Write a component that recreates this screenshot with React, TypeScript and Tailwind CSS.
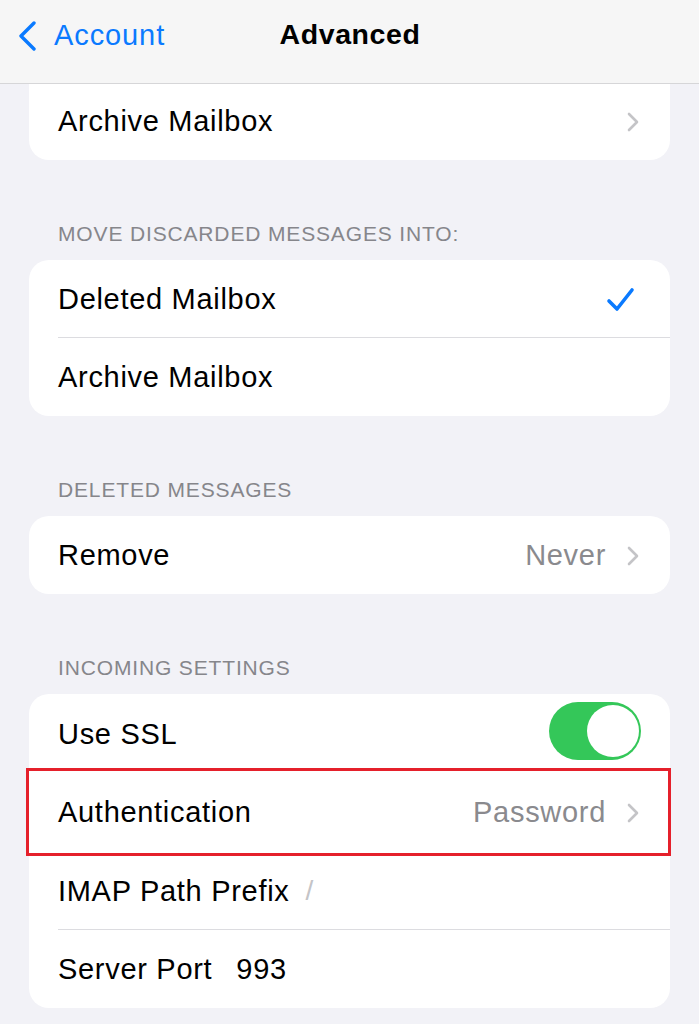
import React from "react";

const font = { fontFamily: '"Liberation Sans", Arial, sans-serif' };
const T = "text-[29px] tracking-[0.7px]";

function Chevron() {
  return (
    <svg width="14" height="22" viewBox="0 0 14 22" className="shrink-0">
      <path d="M3 3 L11 11 L3 19" fill="none" stroke="#c4c4c7" strokeWidth="2.6" strokeLinecap="round" strokeLinejoin="round" />
    </svg>
  );
}

function Row({ children, divider = true, tall = false }: { children: React.ReactNode; divider?: boolean; tall?: boolean }) {
  return (
    <div className={`relative flex ${tall ? "h-[78.5px]" : "h-[78px]"} items-center pl-[29px] pr-[30px] pt-[2px]`}>
      {children}
      {divider && <div className="absolute bottom-0 left-[29px] right-0 h-px bg-[#dcdce0]" />}
    </div>
  );
}

function Label({ children }: { children: React.ReactNode }) {
  return (
    <div className="pl-[58px] pt-[62px] pb-[14px] text-[21px] leading-[24px] text-[#86868b] tracking-[0.85px]">
      {children}
    </div>
  );
}

export default function App() {
  return (
    <div className="min-h-[1024px] w-[699px] bg-[#f2f2f7] overflow-hidden text-black" style={font}>
      <div className="relative flex h-[84px] items-center border-b border-[#d6d6d8] bg-[#f6f6f6]">
        <div className="absolute left-[14px] top-[19px] flex items-center">
          <svg width="26" height="32" viewBox="0 0 26 32">
            <path d="M20 4 L7 17 L20 30" fill="none" stroke="#0a7aff" strokeWidth="3.4" strokeLinecap="round" strokeLinejoin="round" />
          </svg>
          <span className="ml-[14px] text-[29px] leading-none text-[#0a7aff] tracking-[0.9px]">Account</span>
        </div>
        <div className="w-full pb-[14px] pl-[1px] text-center text-[28.5px] font-bold tracking-[0.6px]">Advanced</div>
      </div>

      <div className="mx-[29px] rounded-b-[20px] bg-white">
        <div className="flex h-[76px] items-center pl-[29px] pr-[30px]">
          <span className={`flex-1 ${T}`}>Archive Mailbox</span>
          <Chevron />
        </div>
      </div>

      <Label>MOVE DISCARDED MESSAGES INTO:</Label>
      <div className="mx-[29px] overflow-hidden rounded-[20px] bg-white">
        <Row>
          <span className={`flex-1 ${T}`}>Deleted Mailbox</span>
          <svg width="30" height="26" viewBox="0 0 30 26" className="mr-[4px]">
            <path d="M3 14 L11 22 L26 3" fill="none" stroke="#0a7aff" strokeWidth="3.6" strokeLinecap="round" strokeLinejoin="round" />
          </svg>
        </Row>
        <Row divider={false}>
          <span className={`flex-1 ${T}`}>Archive Mailbox</span>
        </Row>
      </div>

      <Label>DELETED MESSAGES</Label>
      <div className="mx-[29px] overflow-hidden rounded-[20px] bg-white">
        <Row divider={false}>
          <span className={`flex-1 ${T}`}>Remove</span>
          <span className={`mr-[20px] ${T} text-[#8a8a8e]`}>Never</span>
          <Chevron />
        </Row>
      </div>

      <Label>INCOMING SETTINGS</Label>
      <div className="relative mx-[29px] rounded-[20px] bg-white">
        <Row divider={false} tall>
          <span className={`flex-1 ${T}`}>Use SSL</span>
          <div className="-mr-[1px] -mt-[6px] flex h-[58px] w-[92px] items-center justify-end rounded-full bg-[#34c759] pr-[2px]">
            <div className="h-[52px] w-[52px] rounded-full bg-white" />
          </div>
        </Row>
        <Row divider={false} tall>
          <span className={`flex-1 ${T}`}>Authentication</span>
          <span className={`mr-[20px] ${T} text-[#8a8a8e]`}>Password</span>
          <Chevron />
          <div className="pointer-events-none absolute -left-[3px] -right-[1px] -top-[5px] -bottom-[5px] border-[3px] border-[#e5202b]" />
        </Row>
        <Row tall>
          <span className={T}>IMAP Path Prefix</span>
          <span className="ml-[16px] text-[28px] text-[#c4c4c7]">/</span>
        </Row>
        <Row divider={false} tall>
          <span className={T}>Server Port</span>
          <span className={`ml-[24px] ${T}`}>993</span>
        </Row>
      </div>
    </div>
  );
}
